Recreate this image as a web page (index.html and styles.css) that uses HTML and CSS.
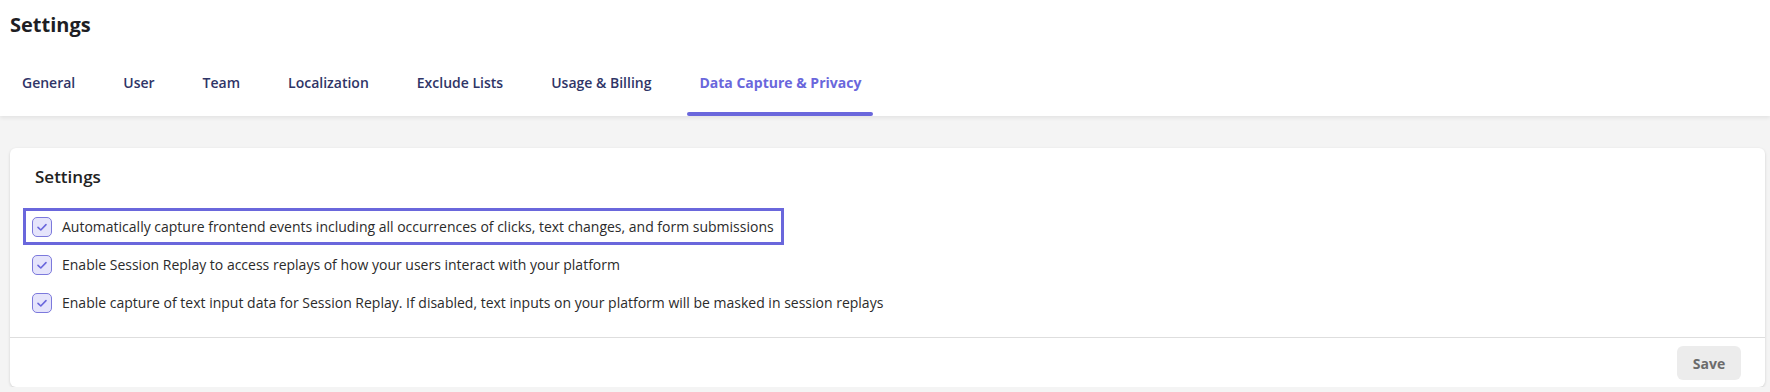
FILE: index.html
```html
<!DOCTYPE html>
<html lang="en">
<head>
    <meta charset="UTF-8">
    <meta name="viewport" content="width=device-width, initial-scale=1.0">
    <title>Settings</title>
    <link rel="stylesheet" href="styles.css">
</head>
<body>
    <header class="page-header">
        <h1>Settings</h1>
        <nav class="tabs">
            <a href="#" class="tab">General</a>
            <a href="#" class="tab">User</a>
            <a href="#" class="tab">Team</a>
            <a href="#" class="tab">Localization</a>
            <a href="#" class="tab">Exclude Lists</a>
            <a href="#" class="tab">Usage &amp; Billing</a>
            <a href="#" class="tab active">Data Capture &amp; Privacy</a>
        </nav>
    </header>

    <main class="content">
        <section class="card">
            <div class="card-body">
                <h2>Settings</h2>
                <div class="options">
                    <label class="option focused">
                        <span class="check">
                            <svg width="14" height="14" viewBox="0 0 14 14"><path d="M3 7.3 L5.8 10 L11 4.6" fill="none" stroke="#6a67dc" stroke-width="1.6" stroke-linecap="round" stroke-linejoin="round"/></svg>
                        </span>
                        Automatically capture frontend events including all occurrences of clicks, text changes, and form submissions
                    </label>
                    <label class="option">
                        <span class="check">
                            <svg width="14" height="14" viewBox="0 0 14 14"><path d="M3 7.3 L5.8 10 L11 4.6" fill="none" stroke="#6a67dc" stroke-width="1.6" stroke-linecap="round" stroke-linejoin="round"/></svg>
                        </span>
                        Enable Session Replay to access replays of how your users interact with your platform
                    </label>
                    <label class="option">
                        <span class="check">
                            <svg width="14" height="14" viewBox="0 0 14 14"><path d="M3 7.3 L5.8 10 L11 4.6" fill="none" stroke="#6a67dc" stroke-width="1.6" stroke-linecap="round" stroke-linejoin="round"/></svg>
                        </span>
                        Enable capture of text input data for Session Replay. If disabled, text inputs on your platform will be masked in session replays
                    </label>
                </div>
            </div>
            <div class="card-footer">
                <button class="save-btn">Save</button>
            </div>
        </section>
    </main>
</body>
</html>
```

FILE: styles.css
```css
* {
    margin: 0;
    padding: 0;
    box-sizing: border-box;
}

body {
    font-family: 'Open Sans', 'Liberation Sans', sans-serif;
    background: #f4f4f4;
    color: #2b2b2b;
}

.page-header {
    background: #ffffff;
    padding: 10px 10px 0;
    box-shadow: 0 2px 4px rgba(0, 0, 0, 0.07);
    position: relative;
}

.page-header h1 {
    font-size: 20px;
    font-weight: 700;
    line-height: 30px;
    color: #1e1e24;
}

.tabs {
    display: flex;
    gap: 24px;
}

.tab {
    position: relative;
    padding: 33px 12px 23px;
    font-size: 14px;
    font-weight: 600;
    line-height: 20px;
    color: #2f3567;
    text-decoration: none;
}

.tab.active {
    color: #6a67dc;
    font-weight: 700;
}

.tab.active::after {
    content: "";
    position: absolute;
    left: 0;
    right: 0;
    bottom: 0;
    height: 4px;
    border-radius: 2px;
    background: #6a67dc;
}

.content {
    padding: 32px 5px 0 10px;
}

.card {
    background: #ffffff;
    border-radius: 6px;
    box-shadow: 0 1px 3px rgba(0, 0, 0, 0.15);
}

.card-body {
    padding: 17px 13px 16px;
    border-bottom: 1px solid #dedede;
}

.card-body h2 {
    font-size: 17px;
    font-weight: 600;
    line-height: 24px;
    color: #222;
    padding-left: 12px;
    margin-bottom: 19px;
}

.options {
    display: flex;
    flex-direction: column;
    align-items: flex-start;
    gap: 1px;
}

.option {
    display: inline-flex;
    align-items: center;
    gap: 10px;
    height: 37px;
    padding: 0 7px 0 6px;
    border: 3px solid transparent;
    font-size: 14px;
    color: #2b2b2b;
    cursor: pointer;
}

.option.focused {
    border-color: #6a67dc;
}

.check {
    width: 20px;
    height: 20px;
    flex-shrink: 0;
    display: flex;
    align-items: center;
    justify-content: center;
    border: 1.5px solid #7c79dc;
    border-radius: 5px;
    background: #e5e4fb;
}

.card-footer {
    display: flex;
    justify-content: flex-end;
    padding: 8px 24px 7px;
}

.save-btn {
    width: 64px;
    height: 34px;
    border: none;
    border-radius: 6px;
    background: #ececec;
    color: #6b6b6b;
    font-family: inherit;
    font-size: 14px;
    font-weight: 700;
}
```
